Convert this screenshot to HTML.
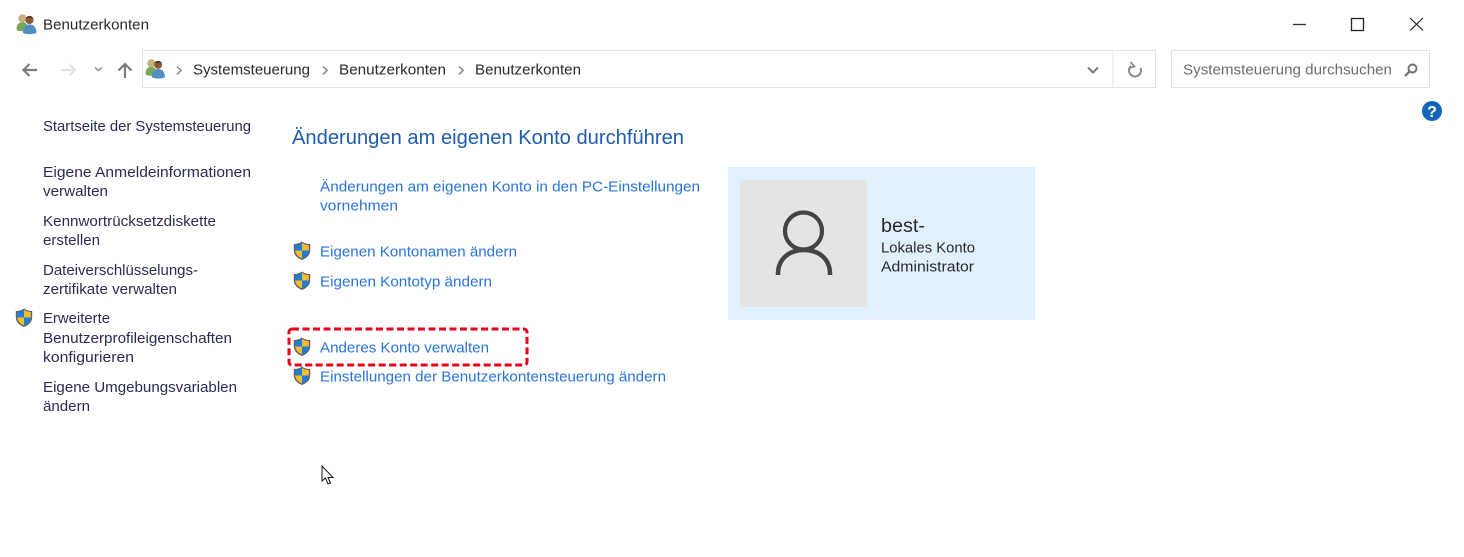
<!DOCTYPE html>
<html lang="de">
<head>
<meta charset="utf-8">
<title>Benutzerkonten</title>
<style>
html,body{margin:0;padding:0;background:#fff;width:1464px;height:557px;overflow:hidden}
svg{display:block;position:absolute;left:0;top:0;filter:blur(.35px)}
text{font-family:"Liberation Sans",sans-serif;font-size:14.5px}
.d{fill:#2a2a2a}
.s{fill:#2b2b55}
.l{fill:#2a74d8;transform:translateY(.5px)}
.u{transform:translateY(.5px)}
</style>
</head>
<body>
<svg width="1464" height="557" viewBox="0 0 1464 557" xmlns="http://www.w3.org/2000/svg">
<defs>
<g id="sh">
<path d="M9 0.500 C6.500 2.500 3.500 3 0.800 3 L0.800 9.500 C0.800 14 4.500 17.200 9 19 C13.500 17.200 17.200 14 17.200 9.500 L17.200 3 C14.500 3 11.500 2.500 9 0.500Z" fill="#5f6468"/>
<path d="M9 2 C7 3.400 4.600 4 2.200 4.100 L2.200 9.500 L9 9.500Z" fill="#1f7fd6"/>
<path d="M9 2 C11 3.400 13.400 4 15.800 4.100 L15.800 9.500 L9 9.500Z" fill="#f6bb2e"/>
<path d="M2.200 9.500 L9 9.500 L9 17.400 C5.400 15.900 2.400 13.200 2.200 9.500Z" fill="#f6bb2e"/>
<path d="M15.800 9.500 L9 9.500 L9 17.400 C12.600 15.900 15.600 13.200 15.800 9.500Z" fill="#1f7fd6"/>
</g>
<g id="us">
<circle cx="6" cy="5" r="3.800" fill="#c9b078"/>
<path d="M0.500 15 C0.500 10.500 2.800 8.500 6 8.500 C9.200 8.500 11 10.500 11 15 L8 17 L1.500 16.500Z" fill="#76a85a"/>
<circle cx="12.500" cy="6.500" r="3.800" fill="#8a5a3a"/>
<path d="M9 4.800 C10 2.400 15 2.400 16 4.800 C14 4.200 11 4.200 9 4.800Z" fill="#2c2c2c"/>
<path d="M6.500 18.500 C6.500 13 9 10.500 12.500 10.500 C16 10.500 19 13 19 18.500 C15 20 10 20 6.500 18.500Z" fill="#4f8fc6"/>
</g>
</defs>

<!-- title bar -->
<use href="#us" transform="translate(16 13) scale(1.08)"/>
<text class="d u" x="43" y="29" textLength="106" lengthAdjust="spacingAndGlyphs">Benutzerkonten</text>
<path d="M1293 24.500H1306" stroke="#333" stroke-width="1.300"/>
<rect x="1351.500" y="18.500" width="12" height="12" fill="none" stroke="#222" stroke-width="1.300"/>
<path d="M1410 18L1423 30.500M1423 18L1410 30.500" stroke="#222" stroke-width="1.200" fill="none"/>

<!-- nav -->
<path d="M37 70H24M29.500 64L23.500 70L29.500 76" stroke="#7a7a7a" stroke-width="2.200" fill="none"/>
<path d="M61 70H75M69.500 64.500L75 70L69.500 75.500" stroke="#dedede" stroke-width="1.800" fill="none"/>
<path d="M95 67.500L98.500 70.500L102 67.500" stroke="#9a9a9a" stroke-width="1.700" fill="none"/>
<path d="M125 78V65M118.500 70.500L125 64L131.500 70.500" stroke="#7a7a7a" stroke-width="2.200" fill="none"/>

<!-- address bar -->
<rect x="142.500" y="50.500" width="1013" height="37" fill="#fff" stroke="#e2e2e2"/>
<path d="M1113 51V87" stroke="#e2e2e2"/>
<use href="#us" transform="translate(145 58) scale(1.05)"/>
<path d="M177 66.500L181 70.500L177 74.500" stroke="#8a8a8a" stroke-width="1.500" fill="none"/>
<text class="d u" x="193" y="74" textLength="117" lengthAdjust="spacingAndGlyphs">Systemsteuerung</text>
<path d="M323 66.500L327 70.500L323 74.500" stroke="#8a8a8a" stroke-width="1.500" fill="none"/>
<text class="d u" x="339" y="74" textLength="107" lengthAdjust="spacingAndGlyphs">Benutzerkonten</text>
<path d="M459 66.500L463 70.500L459 74.500" stroke="#8a8a8a" stroke-width="1.500" fill="none"/>
<text class="d u" x="475" y="74" textLength="106" lengthAdjust="spacingAndGlyphs">Benutzerkonten</text>
<path d="M1088 67.500L1093 72.500L1098 67.500" stroke="#7a7a7a" stroke-width="2" fill="none"/>
<path d="M1140.500 68A6 6 0 1 1 1131 66" stroke="#8a8a8a" stroke-width="2" fill="none"/>
<path d="M1130.500 62L1134.500 66.500L1129.500 68" stroke="#8a8a8a" stroke-width="1.700" fill="none"/>

<!-- search -->
<rect x="1171.500" y="50.500" width="258" height="37" fill="#fff" stroke="#e2e2e2"/>
<text class="u" x="1183" y="74" fill="#6d6d6d" textLength="209" lengthAdjust="spacingAndGlyphs">Systemsteuerung durchsuchen</text>
<circle cx="1412.500" cy="68.500" r="4" fill="none" stroke="#6f6f6f" stroke-width="1.900"/>
<path d="M1409.500 71.500L1405 76" stroke="#6f6f6f" stroke-width="2.200"/>

<!-- help -->
<circle cx="1432" cy="111" r="10" fill="#1565b8"/>
<text x="1432" y="117" text-anchor="middle" fill="#fff" font-weight="bold" style="font-size:16px">?</text>

<!-- sidebar -->
<text class="s" x="43" y="131" textLength="208" lengthAdjust="spacingAndGlyphs">Startseite der Systemsteuerung</text>
<text class="s" x="43" y="177" textLength="208" lengthAdjust="spacingAndGlyphs">Eigene Anmeldeinformationen</text>
<text class="s" x="43" y="196" textLength="65" lengthAdjust="spacingAndGlyphs">verwalten</text>
<text class="s" x="43" y="226" textLength="173" lengthAdjust="spacingAndGlyphs">Kennwortrücksetzdiskette</text>
<text class="s" x="43" y="245" textLength="57" lengthAdjust="spacingAndGlyphs">erstellen</text>
<text class="s" x="43" y="275" textLength="155" lengthAdjust="spacingAndGlyphs">Dateiverschlüsselungs-</text>
<text class="s" x="43" y="294" textLength="134" lengthAdjust="spacingAndGlyphs">zertifikate verwalten</text>
<use href="#sh" x="15" y="308"/>
<text class="s" x="43" y="323" textLength="67" lengthAdjust="spacingAndGlyphs">Erweiterte</text>
<text class="s" x="43" y="343" textLength="189" lengthAdjust="spacingAndGlyphs">Benutzerprofileigenschaften</text>
<text class="s" x="43" y="362" textLength="91" lengthAdjust="spacingAndGlyphs">konfigurieren</text>
<text class="s" x="43" y="392" textLength="194" lengthAdjust="spacingAndGlyphs">Eigene Umgebungsvariablen</text>
<text class="s" x="43" y="411" textLength="47" lengthAdjust="spacingAndGlyphs">ändern</text>

<!-- main -->
<text x="292" y="144" fill="#1f5cae" style="font-size:20px" textLength="392" lengthAdjust="spacingAndGlyphs">Änderungen am eigenen Konto durchführen</text>
<text class="l" x="320" y="191" textLength="380" lengthAdjust="spacingAndGlyphs">Änderungen am eigenen Konto in den PC-Einstellungen</text>
<text class="l" x="320" y="210" textLength="78" lengthAdjust="spacingAndGlyphs">vornehmen</text>
<use href="#sh" x="293" y="241"/>
<text class="l" x="320" y="256" textLength="197" lengthAdjust="spacingAndGlyphs">Eigenen Kontonamen ändern</text>
<use href="#sh" x="293" y="271"/>
<text class="l" x="320" y="286" textLength="172" lengthAdjust="spacingAndGlyphs">Eigenen Kontotyp ändern</text>
<use href="#sh" x="293" y="337"/>
<text class="l" x="320" y="352" textLength="169" lengthAdjust="spacingAndGlyphs">Anderes Konto verwalten</text>
<use href="#sh" x="293" y="366"/>
<text class="l" x="320" y="381" textLength="346" lengthAdjust="spacingAndGlyphs">Einstellungen der Benutzerkontensteuerung ändern</text>
<rect x="289" y="329" width="238" height="36" rx="3" fill="none" stroke="#e8001c" stroke-width="3" stroke-dasharray="7 3.500"/>

<!-- account card -->
<rect x="728" y="167" width="307" height="153" fill="#e1f0fd"/>
<rect x="740" y="180" width="127" height="127" fill="#e4e4e4"/>
<circle cx="803.500" cy="231" r="18.500" fill="none" stroke="#444" stroke-width="4.200"/>
<path d="M778 275V274C778 259 789 250 804 250C819 250 830 259 830 274V275" fill="none" stroke="#444" stroke-width="4.500"/>
<text class="d" x="881" y="232" style="font-size:19px" textLength="44" lengthAdjust="spacingAndGlyphs">best-</text>
<text class="d" x="881" y="252.500" textLength="94" lengthAdjust="spacingAndGlyphs">Lokales Konto</text>
<text class="d" x="881" y="271.500" textLength="93" lengthAdjust="spacingAndGlyphs">Administrator</text>

<!-- cursor -->
<path d="M322 466V481L325.500 478L328 484L330.500 483L328 477.500L333 477.500Z" fill="#fff" stroke="#111" stroke-width="1"/>
</svg>
</body>
</html>
